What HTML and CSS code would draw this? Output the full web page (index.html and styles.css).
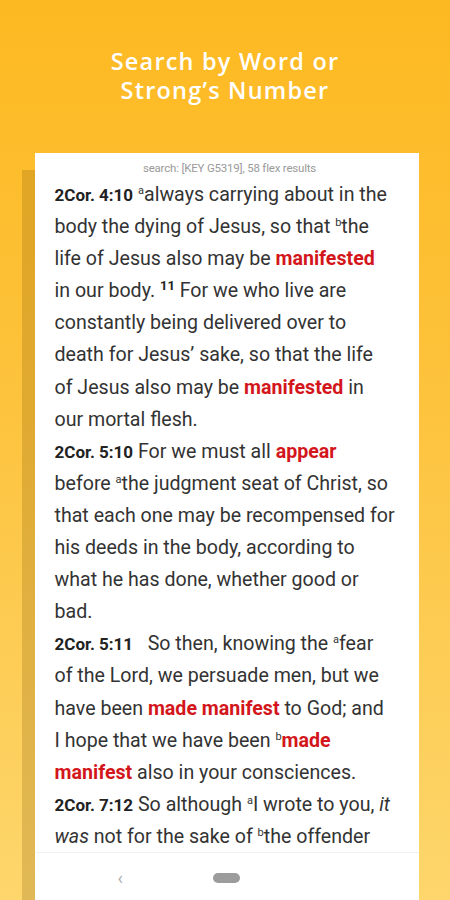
FILE: index.html
```html
<!DOCTYPE html>
<html>
  <head>
    <title>Search by Word or Strong's Number</title>
    <meta http-equiv="Content-Type" content="text/html; charset=UTF-8"/>
    <link rel="stylesheet" href="styles.css">
  </head>
  <body>
    <h1 class="headline">Search by Word or<br />Strong’s Number</h1>

    <div class="phone">
      <div class="results">
        <div class="search-info">search: [KEY G5319], 58 flex results</div>

        <p class="verse"><b class="ref">2Cor. 4:10</b> <sup>a</sup>always carrying about in the<br />
          body the dying of Jesus, so that <sup>b</sup>the<br />
          life of Jesus also may be <b class="hit">manifested</b><br />
          in our body. <sup class="num">11</sup> For we who live are<br />
          constantly being delivered over to<br />
          death for Jesus’ sake, so that the life<br />
          of Jesus also may be <b class="hit">manifested</b> in<br />
          our mortal flesh.</p>

        <p class="verse"><b class="ref">2Cor. 5:10</b> For we must all <b class="hit">appear</b><br />
          before <sup>a</sup>the judgment seat of Christ, so<br />
          that each one may be recompensed for<br />
          his deeds in the body, according to<br />
          what he has done, whether good or<br />
          bad.</p>

        <p class="verse"><b class="ref">2Cor. 5:11</b> &nbsp; So then, knowing the <sup>a</sup>fear<br />
          of the Lord, we persuade men, but we<br />
          have been <b class="hit">made manifest</b> to God; and<br />
          I hope that we have been <sup>b</sup><b class="hit">made</b><br />
          <b class="hit">manifest</b> also in your consciences.</p>

        <p class="verse"><b class="ref">2Cor. 7:12</b> So although <sup>a</sup>I wrote to you, <i>it</i><br />
          <i>was</i> not for the sake of <sup>b</sup>the offender</p>
      </div>

      <div class="navbar">
        <span class="nav-back">&lsaquo;</span>
        <span class="nav-home"></span>
      </div>
    </div>
  </body>
</html>
```

FILE: styles.css
```css
html, body {
  margin: 0;
  height: 900px;
  overflow: hidden;
}

body {
  background: linear-gradient(to bottom, #fdb921 0%, #fdc33d 45%, #fdd66c 100%);
  font-family: Roboto, 'Noto Sans', sans-serif;
  display: flex;
  flex-direction: column;
  align-items: center;
}

.headline {
  margin: 47px 0 0;
  color: #fff;
  font-family: 'Open Sans', 'DejaVu Sans', sans-serif;
  font-weight: 600;
  font-size: 23.5px;
  line-height: 29px;
  letter-spacing: 1.2px;
  text-align: center;
}

.phone {
  margin-top: 48px;
  margin-left: 3px;
  width: 384px;
  flex: 1;
  background: #fff;
  box-shadow: -13px 17px 0 rgba(110, 70, 0, 0.2);
  display: flex;
  flex-direction: column;
}

.results {
  height: 700px;
  overflow: hidden;
  padding: 7px 8px 0 20px;
  box-sizing: border-box;
  border-bottom: 1px solid #f0f0f0;
}

.search-info {
  color: #9a9a9a;
  font-size: 11.5px;
  line-height: 16px;
  letter-spacing: -0.2px;
  text-align: center;
  margin: 0 6px 3px 0;
}

.verse {
  margin: 0;
  color: #333;
  font-size: 19.6px;
  line-height: 32.1px;
}

.ref {
  color: #222;
  font-size: 17px;
  font-weight: bold;
}

.hit {
  color: #d3161b;
  font-weight: bold;
}

sup {
  font-size: 11px;
  line-height: 0;
  vertical-align: 7px;
}

sup.num {
  font-size: 13px;
  font-weight: bold;
  color: #222;
}

.navbar {
  flex: 1;
  display: flex;
  align-items: center;
  padding-top: 2px;
}

.nav-back {
  margin-left: 83px;
  color: #b0b0b0;
  font-size: 18px;
  line-height: 1;
}

.nav-home {
  margin-left: 90px;
  width: 27px;
  height: 10px;
  border-radius: 5px;
  background: #9c9c9c;
}
```
